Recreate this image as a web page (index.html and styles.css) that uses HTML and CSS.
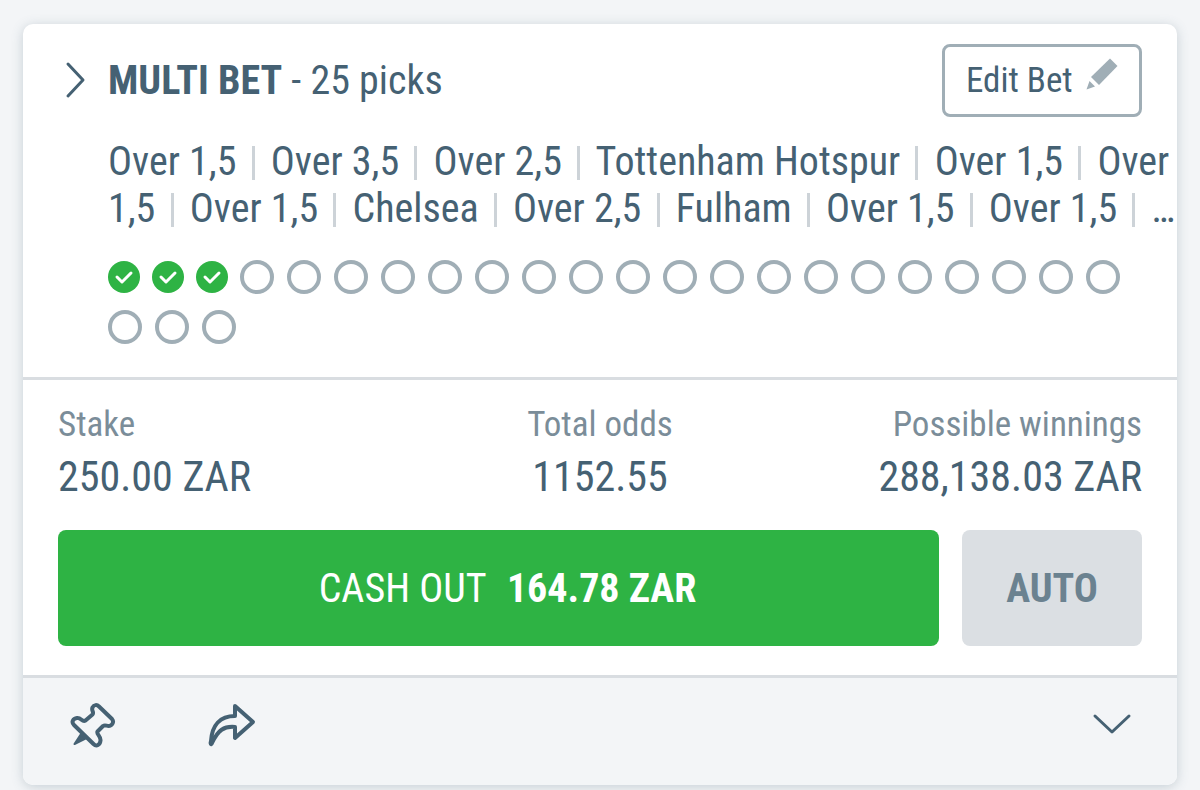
FILE: index.html
```
<!DOCTYPE html>
<html lang="en">
<head>
    <meta charset="UTF-8">
    <meta name="viewport" content="width=device-width, initial-scale=1.0">
    <title>Multi Bet - 25 picks</title>
    <link rel="stylesheet" href="styles.css">
</head>
<body>
    <div class="bet-card">
        <div class="bet-top">
            <div class="bet-header">
                <button class="icon-btn expand-btn" aria-label="Show picks">
                    <svg width="24" height="40" viewBox="0 0 24 40"><path d="M4 3 L19 19 L4 35"/></svg>
                </button>
                <h1 class="bet-title"><strong>MULTI BET</strong> - 25 picks</h1>
                <button class="edit-btn">
                    Edit Bet
                    <svg class="pencil" width="32" height="32" viewBox="0 0 32 32"><path d="M24 0.5 L31.5 8 L13 27 L5 19 Z"/><path d="M3.5 23 L9 28.5 L0.5 31.5 Z"/></svg>
                </button>
            </div>

            <p class="picks">
                <span>Over 1,5</span> <i></i>
                <span>Over 3,5</span> <i></i>
                <span>Over 2,5</span> <i></i>
                <span>Tottenham Hotspur</span> <i></i>
                <span>Over 1,5</span> <i></i>
                <span>Over 1,5</span> <i></i>
                <span>Over 1,5</span> <i></i>
                <span>Chelsea</span> <i></i>
                <span>Over 2,5</span> <i></i>
                <span>Fulham</span> <i></i>
                <span>Over 1,5</span> <i></i>
                <span>Over 1,5</span> <i></i>
                <span>…</span>
            </p>

            <div class="progress">
                <span class="dot won"><svg width="32" height="32" viewBox="0 0 32 32"><path d="M9 16 L14 21 L23 12"/></svg></span>
                <span class="dot won"><svg width="32" height="32" viewBox="0 0 32 32"><path d="M9 16 L14 21 L23 12"/></svg></span>
                <span class="dot won"><svg width="32" height="32" viewBox="0 0 32 32"><path d="M9 16 L14 21 L23 12"/></svg></span>
                <span class="dot"></span><span class="dot"></span><span class="dot"></span><span class="dot"></span>
                <span class="dot"></span><span class="dot"></span><span class="dot"></span><span class="dot"></span>
                <span class="dot"></span><span class="dot"></span><span class="dot"></span><span class="dot"></span>
                <span class="dot"></span><span class="dot"></span><span class="dot"></span><span class="dot"></span>
                <span class="dot"></span><span class="dot"></span><span class="dot"></span><span class="dot"></span>
                <span class="dot"></span><span class="dot"></span>
            </div>
        </div>

        <div class="bet-body">
            <dl class="totals">
                <div><dt>Stake</dt><dd>250.00 ZAR</dd></div>
                <div><dt>Total odds</dt><dd>1152.55</dd></div>
                <div><dt>Possible winnings</dt><dd>288,138.03 ZAR</dd></div>
            </dl>
            <div class="actions">
                <button class="cashout-btn">CASH OUT <strong>164.78 ZAR</strong></button>
                <button class="auto-btn">AUTO</button>
            </div>
        </div>

        <div class="bet-footer">
            <button class="icon-btn" aria-label="Pin">
                <svg class="bold" width="48" height="48" viewBox="0 0 48 48"><path d="M31 5.5 L44 18 C46.5 21 44 25 40.5 25 C38.5 25 37 23.5 35 25 L29.5 30.5 C28 33 33 35 32.5 39.5 C32 44 28.5 46 25.5 43 L6 24 C3 21 5 17.5 9 17 C13.5 16.5 14 21.5 17.5 19.5 L24.5 13.5 C26.5 11.5 23 9.5 24.5 6.5 C26 3.5 29 3.5 31 5.5 Z"/><path class="needle" d="M13 33 L17.5 37.5 L6.5 43 Z"/></svg>
            </button>
            <button class="icon-btn" aria-label="Share">
                <svg class="bold" width="50" height="48" viewBox="0 0 50 48"><path d="M29 5 L47 21 L29 37 V26 C18 25 12 29 6 42 C5 44 4 43 5 40 C6 24 14 15 29 15 Z"/></svg>
            </button>
            <button class="icon-btn more-btn" aria-label="Show more">
                <svg width="40" height="24" viewBox="0 0 40 24"><path d="M3 3 L20 19 L37 3"/></svg>
            </button>
        </div>
    </div>
</body>
</html>
```
FILE: styles.css
```
* { margin: 0; padding: 0; box-sizing: border-box; }
body { font-family: 'Roboto Condensed', 'Liberation Sans Narrow', Roboto, sans-serif; background: #f3f5f7; color: #456173; padding: 24px 23px 5px; }
button { font-family: inherit; color: inherit; cursor: pointer; }
svg { display: block; fill: none; stroke: #456173; stroke-width: 3; stroke-linecap: round; stroke-linejoin: round; }
.bet-card { background: #fff; border-radius: 10px; box-shadow: 0 2px 12px rgba(69, 97, 115, 0.25); overflow: hidden; }
.bet-top { padding: 20px 0 33px 36px; border-bottom: 3px solid #d9dde1; }
.bet-header { display: flex; align-items: center; padding-right: 35px; }
.icon-btn { background: none; border: none; }
.expand-btn { width: 49px; padding-left: 5px; }
.bet-title { flex: 1; font-size: 40px; font-weight: 400; line-height: 48px; }
.edit-btn { display: flex; align-items: center; justify-content: space-between; width: 200px; height: 73px; padding: 0 21px; background: #fff; border: 3px solid #a0aeb6; border-radius: 8px; font-size: 35px; }
.pencil { fill: #a0aeb6; stroke: none; margin-bottom: 14px; }
.picks { margin: 21px 0 0 49px; font-size: 40px; line-height: 47px; }
.picks i { display: inline-block; width: 3px; height: 34px; margin: 0 7px 0 6px; background: #cdd3d8; vertical-align: -5px; }
.progress { display: flex; flex-wrap: wrap; align-items: center; row-gap: 16px; margin: 28px 35px 0 49px; }
.dot { width: 34px; height: 34px; margin-right: 13px; border: 4px solid #a0aeb6; border-radius: 50%; }
.dot.won { width: 32px; height: 32px; margin-right: 12px; border: none; background: #2eb344; }
.dot.won svg { stroke: #fff; }
.bet-body { padding: 21px 35px 29px; }
.totals { display: grid; grid-template-columns: 1fr 1fr 1fr; margin-bottom: 25px; }
.totals div:nth-child(2) { text-align: center; }
.totals div:nth-child(3) { text-align: right; }
.totals dt { color: #7b8d99; font-size: 35px; line-height: 48px; }
.totals dd { font-size: 42px; line-height: 56px; }
.actions { display: flex; gap: 23px; }
.actions button { height: 116px; border: none; border-radius: 8px; font-size: 40px; }
.cashout-btn { flex: 1; padding-left: 18px; background: #2eb344; }
.actions .cashout-btn { color: #fff; }
.cashout-btn strong { margin-left: 12px; }
.auto-btn { width: 180px; background: #dbdfe3; font-weight: 700; }
.actions .auto-btn { color: #6b8290; }
.bet-footer { display: flex; align-items: center; gap: 90px; height: 110px; padding: 0 45px 14px; background: #f3f5f7; border-top: 3px solid #d9dde1; }
.bold { stroke-width: 4; }
.needle { fill: #456173; stroke-width: 2; }
.more-btn { margin-left: auto; }
```
